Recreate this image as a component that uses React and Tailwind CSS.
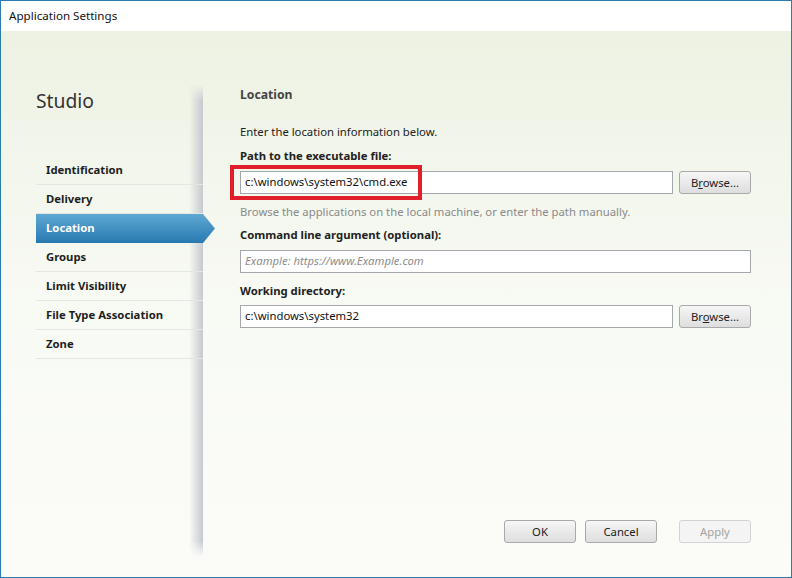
import React from "react";

const navItems = [
  "Identification",
  "Delivery",
  "Location",
  "Groups",
  "Limit Visibility",
  "File Type Association",
  "Zone",
];

const Btn = ({ children, disabled, className = "" }) => (
  <button
    className={
      "h-[23px] w-[72px] rounded-[3px] border text-[11.3px] leading-none " +
      (disabled
        ? "border-[#d3d3d3] bg-[#f4f4f4] text-[#a3a3a3] "
        : "border-[#a9a9a9] bg-linear-to-b from-[#f6f6f6] to-[#dedede] text-[#222] ") +
      className
    }
  >
    {children}
  </button>
);

const NavItem = ({ label, active }) => {
  if (active) {
    return (
      <div className="relative h-[29px] flex items-center pl-[10px] bg-linear-to-b from-[#5ea8d3] to-[#2779b1] text-white font-bold">
        {label}
        <svg
          className="absolute right-[-12px] top-0"
          width="12"
          height="29"
          viewBox="0 0 12 29"
        >
          <defs>
            <linearGradient id="arw" x1="0" y1="0" x2="0" y2="1">
              <stop offset="0" stopColor="#5ea8d3" />
              <stop offset="1" stopColor="#2779b1" />
            </linearGradient>
          </defs>
          <polygon points="0,0 12,14.5 0,29" fill="url(#arw)" />
        </svg>
      </div>
    );
  }
  return (
    <div className="h-[29px] flex items-center pl-[10px] border-b border-[#e4e6e2] font-bold text-[#1e1e1e]">
      {label}
    </div>
  );
};

export default function App() {
  return (
    <div
      className="w-[792px] h-[578px] border border-[#2b7bb2] flex flex-col text-[11.3px] text-[#222]"
      style={{ fontFamily: '"Segoe UI", "Noto Sans", "Open Sans", sans-serif' }}
    >
      {/* title bar */}
      <div className="h-[30px] bg-white flex items-center pl-[8px] text-[11.6px] text-[#111]">
        Application Settings
      </div>

      {/* body */}
      <div className="flex-1 flex bg-linear-to-b from-[#edf2e3] via-[#f8faf4] to-[#fbfcf8]">
        {/* left column */}
        <div className="w-[202px] shrink-0 pl-[35px] relative z-10">
          <div className="mt-[56px] h-[28px] text-[19.3px] leading-[28px] text-[#333]">
            Studio
          </div>
          <div className="mt-[41px]">
            {navItems.map((item) => (
              <NavItem key={item} label={item} active={item === "Location"} />
            ))}
          </div>
        </div>

        {/* content panel */}
        <div className="relative flex-1 mt-[54px] mb-[20px] flex flex-col pl-[37px] pr-[40px]">
          {/* left edge shadow */}
          <div className="absolute left-[-14px] top-0 bottom-0 w-[14px] bg-linear-to-r from-transparent to-[#c5c9cf]" />
          <div className="absolute left-[-14px] top-0 h-[16px] w-[14px] bg-linear-to-b from-[#eef2e5] to-transparent" />
          <div className="absolute left-[-14px] bottom-0 h-[16px] w-[14px] bg-linear-to-t from-[#fbfcf8] to-transparent" />

          <div className="mt-[1px] h-[18px] leading-[18px] text-[12.2px] font-bold text-[#444]">
            Location
          </div>
          <div className="mt-[20px] leading-[16px]">
            Enter the location information below.
          </div>
          <div className="mt-[8px] leading-[16px] font-bold">
            Path to the executable file:
          </div>
          <div className="mt-[7px] flex gap-[6px] items-center">
            <div className="relative flex-1">
              <div className="h-[23px] border border-[#a4a8ad] bg-white flex items-center pl-[4px] text-[#111]">
                c:\windows\system32\cmd.exe
              </div>
              <div className="absolute left-[-10px] top-[-6px] w-[192px] h-[35px] border-[4px] border-[#e11f2b]" />
            </div>
            <Btn>
              B<span className="underline">r</span>owse...
            </Btn>
          </div>
          <div className="mt-[10px] leading-[16px] text-[#8a8a8a]">
            Browse the applications on the local machine, or enter the path
            manually.
          </div>
          <div className="mt-[7px] leading-[16px] font-bold">
            Command line argument (optional):
          </div>
          <div className="mt-[7px] h-[23px] border border-[#a4a8ad] bg-white flex items-center pl-[4px] italic text-[#8c8c8c]">
            Example: https://www.Example.com
          </div>
          <div className="mt-[10px] leading-[16px] font-bold">
            Working directory:
          </div>
          <div className="mt-[6px] flex gap-[6px] items-center">
            <div className="flex-1 h-[23px] border border-[#a4a8ad] bg-white flex items-center pl-[4px] text-[#111]">
              c:\windows\system32
            </div>
            <Btn>
              Br<span className="underline">o</span>wse...
            </Btn>
          </div>

          <div className="mt-auto mb-[14px] flex justify-end">
            <Btn>OK</Btn>
            <Btn className="ml-[9px]">Cancel</Btn>
            <Btn disabled className="ml-[22px]">
              Apply
            </Btn>
          </div>
        </div>
      </div>
    </div>
  );
}
